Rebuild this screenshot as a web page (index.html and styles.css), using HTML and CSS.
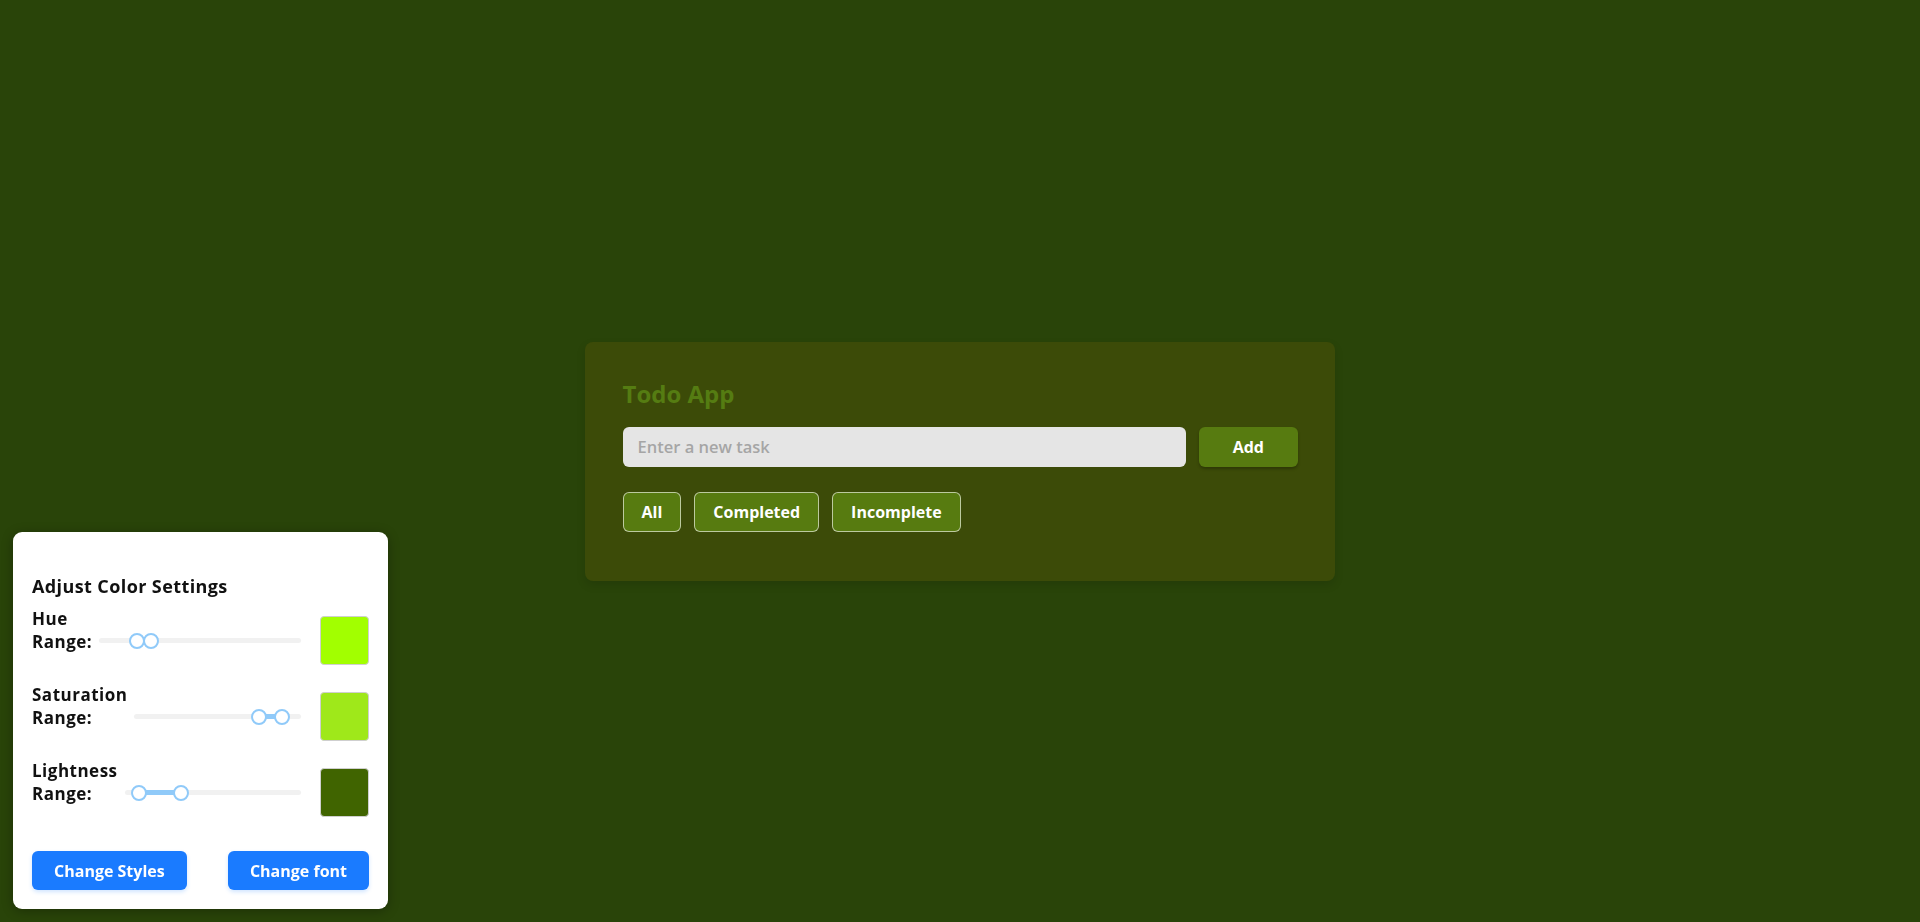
FILE: index.html
```html
<!DOCTYPE html>
<html lang="en">
<head>
<meta charset="utf-8">
<title>Todo App</title>
<link rel="stylesheet" href="styles.css">
</head>
<body>
<main class="page">
  <section class="todo-card">
    <h1 class="todo-title">Todo App</h1>
    <form class="todo-form">
      <input class="todo-input" type="text" placeholder="Enter a new task">
      <button class="add-btn" type="button">Add</button>
    </form>
    <div class="filters">
      <button class="filter-btn" type="button">All</button>
      <button class="filter-btn" type="button">Completed</button>
      <button class="filter-btn" type="button">Incomplete</button>
    </div>
  </section>
</main>

<aside class="color-panel">
  <h3 class="panel-title">Adjust Color Settings</h3>
  <div class="setting-row">
    <label class="setting-label">Hue Range:</label>
    <div class="range">
      <div class="range-track"></div>
      <div class="range-fill" style="left:18.8%;width:7.1%"></div>
      <span class="range-thumb" style="left:18.8%"></span>
      <span class="range-thumb" style="left:25.9%"></span>
    </div>
    <div class="swatch" style="background:#a2ff00"></div>
  </div>
  <div class="setting-row">
    <label class="setting-label">Saturation Range:</label>
    <div class="range">
      <div class="range-track"></div>
      <div class="range-fill" style="left:74.7%;width:13.6%"></div>
      <span class="range-thumb" style="left:74.7%"></span>
      <span class="range-thumb" style="left:88.3%"></span>
    </div>
    <div class="swatch" style="background:#9fe81a"></div>
  </div>
  <div class="setting-row">
    <label class="setting-label">Lightness Range:</label>
    <div class="range">
      <div class="range-track"></div>
      <div class="range-fill" style="left:8.1%;width:23.9%"></div>
      <span class="range-thumb" style="left:8.1%"></span>
      <span class="range-thumb" style="left:32%"></span>
    </div>
    <div class="swatch" style="background:#406400"></div>
  </div>
  <div class="panel-actions">
    <button class="blue-btn" type="button">Change Styles</button>
    <button class="blue-btn" type="button">Change font</button>
  </div>
</aside>
</body>
</html>
```

FILE: styles.css
```css
* { box-sizing: border-box; }

html, body {
  margin: 0;
  padding: 0;
}

body {
  background: #294409;
  font-family: "Open Sans", "Liberation Sans", sans-serif;
  height: 922px;
  overflow: hidden;
}

.page {
  height: 100vh;
  display: flex;
  align-items: center;
  justify-content: center;
}

.todo-card {
  width: 750px;
  background: #3c4b08;
  border-radius: 8px;
  padding: 37px 37px 49px 37.5px;
  box-shadow: 0 4px 10px rgba(0, 0, 0, 0.12);
}

.todo-title {
  margin: 0 0 18px 0;
  font-size: 24px;
  line-height: 30px;
  font-weight: 700;
  color: #557c12;
}

.todo-form {
  display: flex;
  gap: 13px;
  margin: 0 0 25px 0;
}

.todo-input {
  flex: 1;
  height: 40px;
  border: none;
  border-radius: 6px;
  background: #e5e5e5;
  padding: 0 15px;
  font-family: inherit;
  font-size: 16.5px;
  font-weight: 600;
  color: #333;
  outline: none;
}

.todo-input::placeholder {
  color: #a5a5a5;
}

.add-btn {
  height: 40px;
  padding: 0 34px;
  border: none;
  border-radius: 6px;
  background: #577b10;
  color: #fff;
  font-family: inherit;
  font-size: 16px;
  font-weight: 700;
  box-shadow: 0 2px 3px rgba(0, 0, 0, 0.25);
}

.filters {
  display: flex;
  gap: 13px;
}

.filter-btn {
  height: 40px;
  padding: 0 18px;
  border: 1px solid rgba(255, 255, 255, 0.6);
  border-radius: 6px;
  background: #577b10;
  color: #fff;
  font-family: inherit;
  font-size: 16px;
  font-weight: 700;
}

/* Color panel */
.color-panel {
  position: fixed;
  left: 13px;
  bottom: 13px;
  width: 375px;
  background: #fff;
  border-radius: 9px;
  padding: 42px 19px 19px 19px;
  box-shadow: 0 2px 12px rgba(0, 0, 0, 0.3);
}

.panel-title {
  margin: 0 0 17px 0;
  font-size: 18px;
  font-weight: 700;
  letter-spacing: 0.4px;
  line-height: 25px;
  color: #111;
}

.setting-row {
  display: flex;
  align-items: center;
  margin-bottom: 27px;
}

.setting-label {
  width: min-content;
  font-size: 17px;
  font-weight: 700;
  letter-spacing: 0.5px;
  line-height: 23px;
  color: #111;
  align-self: flex-start;
  margin-top: -9px;
}

.range {
  flex: 1;
  position: relative;
  height: 18px;
  margin: 0 19px 0 7px;
  display: flex;
  align-items: center;
}

.range-track {
  width: 100%;
  height: 5px;
  background: #f1f1f1;
  border-radius: 3px;
}

.range-fill {
  position: absolute;
  top: 6.5px;
  height: 5px;
  background: #90caf9;
}

.range-thumb {
  position: absolute;
  top: 1px;
  width: 16px;
  height: 16px;
  margin-left: -8px;
  border: 2px solid #90caf9;
  border-radius: 50%;
  background: #fff;
}

.swatch {
  width: 49px;
  height: 49px;
  flex: none;
  border: 1px solid #cfcfcf;
  border-radius: 4px;
}

.panel-actions {
  display: flex;
  justify-content: space-between;
  margin-top: 34px;
}

.blue-btn {
  height: 39px;
  padding: 0 22px;
  border: none;
  border-radius: 6px;
  background: #1a7bff;
  color: #fff;
  font-family: inherit;
  font-size: 16px;
  font-weight: 700;
  box-shadow: 0 2px 4px rgba(26, 123, 255, 0.2);
}
```
